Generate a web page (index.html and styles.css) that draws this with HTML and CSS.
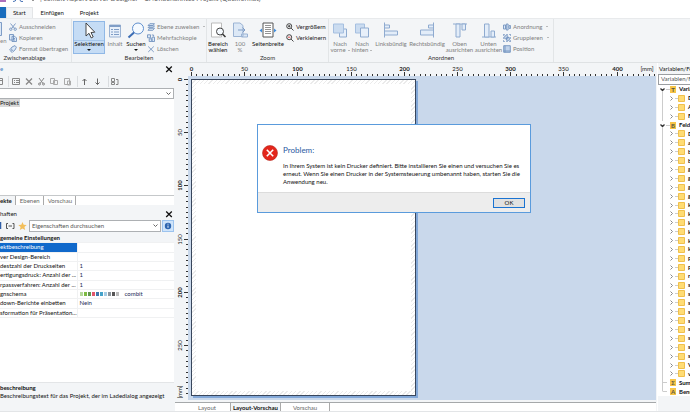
FILE: index.html
```html
<!DOCTYPE html>
<html lang="de">
<head>
<meta charset="utf-8">
<meta name="viewport" content="width=device-width, initial-scale=1">
<title>Designer</title>
<link rel="stylesheet" href="styles.css">
</head>
<body>
<svg class="defs" aria-hidden="true">
  <symbol id="cut" viewBox="0 0 8 8"><path d="M1.5 .5 5.6 5.5M6.5 .5 2.6 5.5"/><circle cx="1.8" cy="6.2" r="1.2"/><circle cx="6.2" cy="6.2" r="1.2"/></symbol>
  <symbol id="copy" viewBox="0 0 8 8"><path class="f" d="M.5.5h4v5.500h-4zM3 2.300h2.800L7.500 4v3.500H3z"/><path d="M4 4.500h2M4 6h2"/></symbol>
  <symbol id="brush" viewBox="0 0 8 8"><path class="f" d="M3 2 6 .6l1.400 1.600L6 5 4.500 6.200 1.800 3.600z"/><path d="M1.800 3.600.6 5l2.600 2.500 1.300-1.300M2 6.200l1-1"/></symbol>
  <symbol id="layers" viewBox="0 0 8 8"><path class="f" d="M2.800.7h4.700L5.800 2.500H1zM2.800 2.900h4.700L5.800 4.700H1zM2.800 5.200h4.700L5.800 7.300H1z"/></symbol>
  <symbol id="multi" viewBox="0 0 8 8"><path class="f" d="M.5.8h3v3h-3zM2.200 4.800h2.600v2.700H2.200zM5 3.200h2.500v4.300H5z"/><path d="M4.800 1h1.800v1.600"/></symbol>
  <symbol id="x" viewBox="0 0 8 8"><path d="m1.200 1.500 5.600 5.500M6.800 1.500 1.200 7"/></symbol>
  <symbol id="zin" viewBox="0 0 8 8"><circle cx="3.200" cy="3.200" r="2.500"/><path d="m5.100 5.100 2.400 2.400M2 3.200h2.400M3.200 2v2.400"/></symbol>
  <symbol id="zout" viewBox="0 0 8 8"><circle cx="3.200" cy="3.200" r="2.500"/><path d="m5.100 5.100 2.400 2.400"/><path class="red" d="M2 3.200h2.400"/></symbol>
  <symbol id="arrange" viewBox="0 0 8 8"><path class="f" d="M.5 2h2v4h-2zM3.300 1h1.800v6H3.300zM6 2.600h1.600v2.800H6z"/></symbol>
  <symbol id="group" viewBox="0 0 8 8"><path class="f" d="M1.800 1.800h3v3h-3zM3.500 3.500h2.800v2.800H3.500z"/><path d="M.4 1.800V.4h1.400M6.200.4h1.400v1.400M7.600 6.200v1.400H6.200M1.800 7.600H.4V6.200M3.200.4h1.600M3.200 7.600h1.600M.4 3.200v1.600M7.600 3.200v1.600"/></symbol>
  <symbol id="pos" viewBox="0 0 8 8"><path d="M.7.7h6.600v6.600H.7z" fill="#c0d2ea"/><path d="M2 .7v6.600M.7 6h6.600"/></symbol>
</svg>
<div class="app">
  <header>
    <div class="titlebar">
      <svg width="36" height="3" viewBox="0 0 36 3"><path d="M0 0h6v2H0z" fill="#ad70bb"/><path d="M13 1.500q3 0 3-2M20 0q0 2 3 1.500" fill="none" stroke="#4b76b8"/><path d="M32 0h2l-1 1z" fill="#333"/></svg>
      <span>| combit Report Server Designer - C:\Unbenanntes Projekt (Quellformat)</span>
    </div>
    <nav class="tabs"><span class="file"></span><a class="on" href="#">Start</a><a href="#">Einfügen</a><a href="#">Projekt</a></nav>
    <div class="ribbon">
      <section class="group g1">
        <div class="tools">
          <div class="rest"><svg width="3" height="16" viewBox="0 0 3 16"><path d="M0 1.500h1.500v13H0" fill="#dce8f6" stroke="#7f9dc6"/></svg><span>en</span></div>
          <div class="small">
            <button><svg><use href="#cut"/></svg>Ausschneiden</button>
            <button><svg><use href="#copy"/></svg>Kopieren</button>
            <button><svg><use href="#brush"/></svg>Format übertragen</button>
          </div>
        </div>
        <h2>Zwischenablage</h2>
      </section>
      <section class="group g2">
        <div class="tools">
          <button class="big sel"><svg viewBox="0 0 18 17"><path d="M6 1v13l3-2.700 2.200 4.600 2-1-2.200-4.400 3.800-.3z" fill="#fff" stroke="#333" stroke-width=".9"/></svg><span>Selektieren</span><i></i></button>
          <button class="big off"><svg viewBox="0 0 18 17"><path d="M3.500 3.500h11v12h-11z" fill="#e8f0fa" stroke="#9bb3d3"/><path d="M3.500 4.500h11" stroke="#7f9dc6" stroke-width="2"/><path d="M5 8h2m1 0h5M5 10.500h2m1 0h5M5 13h2m1 0h5" stroke="#7f9dc6"/></svg><span>Inhalt</span></button>
          <button class="big"><svg viewBox="0 0 18 17"><circle cx="11" cy="7" r="5.500" fill="#f5faff" stroke="#5f8fce"/><path d="m7 11-5.500 5" stroke="#3c6db4" stroke-width="2"/></svg><span>Suchen</span><i></i></button>
          <div class="small">
            <button><svg><use href="#layers"/></svg>Ebene zuweisen<i></i></button>
            <button><svg><use href="#multi"/></svg>Mehrfachkopie</button>
            <button><svg><use href="#x"/></svg>Löschen</button>
          </div>
        </div>
        <h2>Bearbeiten</h2>
      </section>
      <section class="group g3">
        <div class="tools">
          <button class="big"><svg viewBox="0 0 18 17"><path d="M2.500 1.500h10v14h-10z" fill="#fff" stroke="#bbb"/><circle cx="11" cy="10" r="3.500" fill="#f5faff" stroke="#444"/><path d="m13.500 12.500 3 3" stroke="#333" stroke-width="1.500"/></svg><span>Bereich<br>wählen</span></button>
          <button class="big off"><svg viewBox="0 0 18 17"><path d="M2.500 1.500H9L12 4v11H2.500zM10.500 12.500h6v3h-6z" fill="#dce8f6" stroke="#9bb3d3"/><path d="M7 8.500h7M11.500 6l2.500 2.500-2.500 2.500" fill="none" stroke="#7f9dc6"/></svg><span>100<br>%</span></button>
          <button class="big"><svg viewBox="0 0 18 17"><path d="M4 1.500h10v14H4z" fill="#fff" stroke="#555"/><path d="M6 4h6M6 6h6M6 8h6M6 10h6M6 12h6" stroke="#777" stroke-width=".8"/><path d="m3 7-2.500 2L3 11zM15 7l2.500 2-2.500 2z" fill="#3f8ee0"/></svg><span>Seitenbreite</span></button>
          <div class="small dark">
            <button><svg><use href="#zin"/></svg>Vergrößern</button>
            <button><svg><use href="#zout"/></svg>Verkleinern</button>
          </div>
        </div>
        <h2>Zoom</h2>
      </section>
      <section class="group g4">
        <div class="tools">
          <button class="big off"><svg viewBox="0 0 18 17"><path d="M8.500 7.500h7v8h-7z" fill="#e8f0fa" stroke="#8fabd0"/><path d="M2.500 2.500h10v9h-10z" fill="#cbdcf0" stroke="#a5bfe0"/></svg><span>Nach<br>vorne<i></i></span></button>
          <button class="big off"><svg viewBox="0 0 18 17"><path d="M2.500 2.500h9v9h-9z" fill="#cbdcf0" stroke="#a5bfe0"/><path d="M7.500 6.500h8v9h-8z" fill="#e8f0fa" stroke="#8fabd0"/></svg><span>Nach<br>hinten<i></i></span></button>
          <button class="big off"><svg viewBox="0 0 18 17"><path d="M2.500 1v15" stroke="#8fabd0"/><path d="M2.500 3.500h5v3h-5zM2.500 9.500h13v4h-13z" fill="#e3edf9" stroke="#8fabd0"/></svg><span>Linksbündig</span></button>
          <button class="big off"><svg viewBox="0 0 18 17"><path d="M15.500 1v15" stroke="#8fabd0"/><path d="M10.500 3.500h5v3h-5zM2.500 8.500h13v5h-13z" fill="#e3edf9" stroke="#8fabd0"/></svg><span>Rechtsbündig</span></button>
          <button class="big off"><svg viewBox="0 0 18 17"><path d="M2 2.500h14" stroke="#8fabd0"/><path d="M5 2.500h4v13H5zM11 2.500h3.500v6H11z" fill="#e3edf9" stroke="#8fabd0"/></svg><span>Oben<br>ausrichten</span></button>
          <button class="big off"><svg viewBox="0 0 18 17"><path d="M2 15.500h14" stroke="#8fabd0"/><path d="M4.500 2.500h4.500v13H4.500zM11 9.500h3.500v6H11z" fill="#e3edf9" stroke="#8fabd0"/></svg><span>Unten<br>ausrichten</span></button>
          <div class="small">
            <button><svg><use href="#arrange"/></svg>Anordnung<i></i></button>
            <button><svg><use href="#group"/></svg>Gruppieren<i></i></button>
            <button><svg><use href="#pos"/></svg>Position</button>
          </div>
        </div>
        <h2>Anordnen</h2>
      </section>
    </div>
  </header>
  <main>
    <aside class="left">
      <div class="head"><span class="blue">e</span><button aria-label="Schließen"><svg viewBox="0 0 8 8"><use href="#x"/></svg></button></div>
      <div class="toolbar">
        <svg viewBox="0 0 122 13"><g fill="none" stroke="#888"><path d="M0 3.500h2.500v6H0M0 5.500h2"/><path d="M12.500 3.500h7v6h-7zM14 5.500h1m1 0h3M14 7.500h1m1 0h3"/><path d="m26 3.500 6 6M32 3.500l-6 6" stroke-width="1.300"/><path d="m39 3 4 5.500M44 3l-4 5.500"/><circle cx="39.500" cy="9" r="1"/><circle cx="43.500" cy="9" r="1"/><path d="M50.500 3.500h4v5h-4zM53.500 5.500h4v4h-4z" stroke="#aaa"/><path d="M64.500 3.500h5v6h-5zM67.500 6h3v4h-3z" stroke="#aaa"/><path d="M84.500 10V4m-2 2 2-2 2 2M97.500 3.500v6m-2-2 2 2 2-2" stroke="#666"/><path d="M111.500 3.500h3v3h-3zM111.500 7.500h3v2h-3zM116 4.500h2v5h-2"/></g><path d="M8.500 1v11M77.500 1v11M108.500 1v11" stroke="#d9dcdf"/></svg>
      </div>
      <select class="combo" aria-label="Objekt"><option></option></select>
      <div class="objects"><span>Projekt</span></div>
      <div class="subtabs"><a class="on" href="#">ekte</a><a href="#">Ebenen</a><a href="#">Vorschau</a></div>
      <div class="head"><span>haften</span><button aria-label="Schließen"><svg viewBox="0 0 8 8"><use href="#x"/></svg></button></div>
      <div class="search">
        <svg viewBox="0 0 28 12"><path d="M.5 2v7" stroke="#2f5fa8" stroke-width="1.500"/><path d="M8 3.500H6.500v5H8M12.500 3.500H14v5h-1.500M8.500 6h3.500" fill="none" stroke="#555"/><path d="m22.500 2 1.200 2.800 3 .2-2.300 2 .8 3-2.700-1.600L19.800 10l.8-3-2.300-2 3-.2z" fill="#f3bf5b"/></svg>
        <select aria-label="Eigenschaften durchsuchen"><option>Eigenschaften durchsuchen</option></select>
        <button aria-label="Info"><svg viewBox="0 0 11 11"><circle cx="5.500" cy="5.500" r="3.500" fill="#2d65b0"/><path d="M5.500 5v2.500M5.500 3v1" stroke="#fff"/></svg></button>
      </div>
      <div class="props">
        <table>
          <colgroup><col class="name"><col></colgroup>
          <tr><th colspan="2">gemeine Einstellungen</th></tr>
          <tr class="cur"><td>ektbeschreibung</td><td></td></tr>
          <tr><td>ver Design-Bereich</td><td></td></tr>
          <tr><td>destzahl der Druckseiten</td><td>1</td></tr>
          <tr><td>ertigungsdruck: Anzahl der ...</td><td>1</td></tr>
          <tr><td>rpassverfahren: Anzahl der ...</td><td>1</td></tr>
          <tr><td>gnschema</td><td><svg width="40" height="4" viewBox="0 0 40 4"><path fill="#b5d99c" d="M0 0h3v4H0z"/><path fill="#7dbb42" d="M4 0h3v4H4z"/><path fill="#5f9650" d="M8 0h3v4H8z"/><path fill="#e0566c" d="M12 0h3v4h-3z"/><path fill="#3f74ab" d="M16 0h3v4h-3z"/><path fill="#44a2ca" d="M20 0h3v4h-3z"/><path fill="#a6cce4" d="M24 0h3v4h-3z"/><path fill="#8b949c" d="M28 0h3v4h-3z"/><path fill="#555" d="M32 0h3v4h-3z"/><path fill="#bbb" d="M36 0h3v4h-3z"/></svg><span class="scheme">combit</span></td></tr>
          <tr><td>down-Berichte einbetten</td><td>Nein</td></tr>
          <tr><td>sformation für Präsentation...</td><td></td></tr>
        </table>
      </div>
      <div class="desc"><b>beschreibung</b><p>Beschreibungstext für das Projekt, der im Ladedialog angezeigt</p></div>
    </aside>
    <section class="center">
      <svg class="hruler" id="hruler"></svg>
      <svg class="vruler" id="vruler"></svg>
      <div class="canvas"><div class="page"><div></div></div></div>
      <div class="viewtabs"><a href="#">Layout</a><a class="on" href="#">Layout-Vorschau</a><a href="#">Vorschau</a></div>
    </section>
    <aside class="right">
      <div class="head">Variablen/Felder</div>
      <div class="filter">Variablen/Felder</div>
      <ul id="tree"></ul>
    </aside>
  </main>
  <div class="dialog" role="alertdialog" aria-labelledby="dt">
    <div class="body">
      <svg viewBox="0 0 16 16"><circle cx="8" cy="8" r="7.500" fill="#e3261b" stroke="#b5281f" stroke-width=".6"/><path d="m4.800 4.800 6.400 6.400M11.200 4.800l-6.400 6.400" stroke="#fff" stroke-width="1.600"/></svg>
      <div><h1 id="dt">Problem:</h1><p>In Ihrem System ist kein Drucker definiert. Bitte installieren Sie einen und versuchen Sie es<br>erneut. Wenn Sie einen Drucker in der Systemsteuerung umbenannt haben, starten Sie die<br>Anwendung neu.</p></div>
    </div>
    <footer><button>OK</button></footer>
  </div>
</div>
<script src="app.js"></script>
</body>
</html>
```
FILE: styles.css
```css
* { box-sizing: border-box; }
body { margin: 0; font: 6px/8px Lato, "Open Sans", sans-serif; color: #111; background: #fff; }
h1, h2, p, ul { margin: 0; padding: 0; font-weight: normal; }
a { color: inherit; text-decoration: none; }
button, select { font: inherit; color: inherit; border: 0; padding: 0; margin: 0; background: none; }
.defs { position: absolute; width: 0; height: 0; }
.app { height: 100vh; display: flex; flex-direction: column; overflow: hidden; white-space: nowrap; border-bottom: 1px solid #e3e5e7; }
header { flex: none; }

.titlebar { height: 7px; display: flex; gap: 4px; overflow: hidden; color: #666; font-size: 7px; line-height: 1px; }
.titlebar span { margin-top: -2px; }
.titlebar svg { flex: none; }
.tabs { display: flex; height: 11px; line-height: 11px; }
.tabs .file { width: 6px; background: #1a6dbd; }
.tabs a { padding: 0 8px; }
.tabs .on { background: #f3f5f7; border: 1px solid #e3e5e7; border-bottom: 0; padding: 0 6px; line-height: 10px; }

.ribbon { display: flex; height: 45px; background: #f3f5f7; border-top: 1px solid #e8eaec; border-bottom: 1px solid #dfe2e4; }
.group { border-right: 1px solid #e2e5e7; display: flex; flex-direction: column; padding-top: 2px; }
.g1 { width: 72px; }
.g2 { width: 135px; }
.g3 { width: 122px; }
.g4 { width: 225px; }
.tools { display: flex; height: 34px; }
.group h2 { font-size: 6px; line-height: 8px; text-align: center; color: #333; }
.g1 h2 { padding-right: 22px; }
.rest { width: 9px; color: #888; }
.rest svg { display: block; }
.small { display: flex; flex-direction: column; color: #808080; }
.small button { display: flex; align-items: center; gap: 2px; height: 11px; }
.small svg { width: 8px; height: 8px; fill: none; stroke: #7393c0; stroke-width: .9; }
.f { fill: #dce8f6; }
.red { stroke: #d33; }
.dark { color: #222; }
.dark svg { stroke: #333; }
.ribbon i { display: inline-block; border: 1px solid transparent; border-top-color: currentColor; border-bottom: 0; margin-left: 2px; vertical-align: middle; }
.big { display: flex; flex-direction: column; align-items: center; line-height: 6px; }
.big svg { width: 18px; height: 18px; flex: none; }
.big span { margin-top: 2px; }
.big > i { margin: 2px 0 0; border-width: 2px 2px 0; }
.off { color: #808080; }
.sel { background: #c5dcf5; border: 1px solid #90b8e6; }
.sel svg { height: 17px; }
.sel span { border-top: 1px solid #a5c6ea; margin-top: 1px; }
.g2 .tools { display: grid; grid-template-columns: 32px 20px 22px auto; padding-left: 1px; justify-content: start; }
.g3 .tools { display: grid; grid-template-columns: 22px 20px 34px auto; column-gap: 1px; justify-content: start; }
.g4 .tools { display: grid; grid-template-columns: 22px 22px 36px 36px 29px 29px auto; justify-content: start; }

main { flex: 1; min-height: 0; display: grid; grid-template-columns: 176px minmax(0, 1fr) 33px; background: #f3f5f7; }
.left { display: flex; flex-direction: column; min-width: 0; margin-right: 2px; overflow: hidden; }
.head { display: flex; justify-content: space-between; align-items: center; height: 12px; flex: none; }
.left .head svg { width: 8px; height: 8px; display: block; stroke: #111; stroke-width: 1.3; }
.left .head button { padding-right: 1px; }
.blue { color: #3b7fc4; }
.toolbar { height: 13px; flex: none; }
.toolbar svg { width: 122px; height: 13px; display: block; }
.combo, .search select { appearance: none; border: 1px solid #adb0b3; background: #fff url("data:image/svg+xml,%3Csvg xmlns='http://www.w3.org/2000/svg' width='5' height='4'%3E%3Cpath d='m.5.5 2 2 2-2' fill='none' stroke='%23666'/%3E%3C/svg%3E") no-repeat right 2px center; }
.combo { height: 11px; flex: none; width: 100%; border-left: 0; }
.objects { flex: 0 0 96px; background: #fff; }
.objects span { display: inline-block; background: #d9d9d9; padding-right: 1px; }
.subtabs { display: flex; flex: none; height: 12px; line-height: 10px; border-top: 1px solid #c5c8ca; background: #fff; border-bottom: 2px solid #f3f5f7; color: #666; margin-bottom: 1px; }
.subtabs a { padding: 0 3px; border-right: 1px solid #aaa; }
.subtabs a + a { padding-left: 4px; }
.subtabs .on { color: #111; font-weight: 700; background: #f3f5f7; padding-left: 0; }
.search { display: flex; flex: none; height: 14px; gap: 1px; padding-bottom: 2px; }
.search > svg { width: 28px; height: 12px; flex: none; }
.search select { flex: 1; min-width: 0; padding: 0 2px; color: #555; }
.search button { width: 12px; border: 1px solid #9cc3ee; background: #cfe4fa; }
.search button svg { width: 10px; height: 10px; display: block; }
.props { flex: 1; min-height: 0; background: #fff; }
table { border-collapse: collapse; table-layout: fixed; width: 100%; height: 84px; }
.name { width: 77px; }
td, th { padding: 0; border-bottom: 1px solid #f0f1f2; text-align: left; line-height: 8px; overflow: hidden; }
td:first-child { border-right: 1px solid #f0f1f2; }
th { background: #f3f5f7; }
td + td { padding-left: 2px; color: #1c2a55; }
.cur td:first-child { background: #1169cb; color: #fff; }
.scheme { margin-left: 5px; }
.desc { flex: none; height: 29px; line-height: 8px; padding-top: 1px; border-top: 1px solid #e3e5e7; }

.center { display: grid; grid-template: 13px minmax(0, 1fr) 9px / 12px minmax(0, 1fr); margin-right: 1px; }
.hruler { grid-area: 1 / 1 / 2 / 3; width: 100%; height: 13px; }
.vruler { grid-area: 2 / 1; width: 12px; height: 100%; }
.hruler text, .vruler text { font-size: 6px; text-anchor: middle; fill: #222; }
.hruler path, .vruler path { stroke: #333; fill: none; }
.canvas { background: #c9d8eb; padding: 3px; overflow: hidden; margin-bottom: 2px; }
.page { width: 225px; height: 100%; max-height: 317px; background: repeating-linear-gradient(135deg, #fff 0 2px, #ebebeb 2px 3px); border: 1px solid #38465c; box-shadow: 2px 2px 0 #83a8d8; padding: 4px; }
.page div { height: 100%; background: #fff; }
.viewtabs { grid-column: 1 / 3; display: flex; line-height: 9px; background: #fff; border-top: 1px solid #a5a8aa; color: #666; margin-left: -1px; }
.viewtabs a { padding: 0 12px; border-right: 1px solid #aaa; }
.viewtabs a:first-child { padding: 0 14px 0 23px; }
.viewtabs .on { padding: 0 2px; background: #f3f5f7; color: #111; font-weight: 700; }

.right { overflow: hidden; border-left: 1px solid #fff; display: flex; flex-direction: column; }
.right .head { height: 11px; padding-left: 1px; flex: none; }
.filter { height: 11px; flex: none; border: 1px solid #9b9ea1; border-right: 0; background: #fff; padding-left: 2px; color: #555; }
.right ul { list-style: none; background: #fff; height: 311px; display: flex; flex-direction: column; }
.right li { flex: 1 1 0; min-height: 0; display: flex; align-items: center; font-weight: 700; }
.right li svg { width: 28px; height: 9px; flex: none; margin-right: 2px; }
.right li.root svg { width: 19px; }

.dialog { position: absolute; left: 257px; top: 124px; width: 274px; height: 89px; background: #fff; border: 1px solid #5a9bdc; display: flex; flex-direction: column; }
.body { flex: 1; display: flex; gap: 5px; padding: 20px 4px 0; }
.body svg { width: 16px; height: 16px; flex: none; }
.dialog h1 { font-size: 8px; line-height: 10px; color: #2a5a9f; margin-bottom: 7px; }
.dialog p { line-height: 8px; }
.dialog footer { height: 20px; background: #ededed; border-top: 1px solid #dcdcdc; display: flex; justify-content: flex-end; align-items: center; padding-right: 5px; }
.dialog footer button { width: 32px; height: 10px; border: 1px solid #1a73d1; background: #e1e1e1; line-height: 8px; }
```
FILE: app.js
```js
// Ruler ticks: 5 mm apart, long and labelled every 50 mm.
const SCALE = 1.064;
function ruler(id, origin, count, vertical) {
  let ticks = '', labels = '';
  for (let i = 0; i <= count; i++) {
    const p = Math.round(origin + i * 5 * SCALE) + 0.5;
    const len = i % 10 ? 2 : 4;
    ticks += vertical ? `M${12 - len} ${p}H12` : `M${p} ${13 - len}V13`;
    if (i % 10 === 0) {
      const weight = i % 20 ? 400 : 700;
      labels += vertical
        ? `<text transform="translate(6 ${p}) rotate(-90)" font-weight="${weight}">${i * 5}</text>`
        : `<text x="${p}" y="8" font-weight="${weight}">${i * 5}</text>`;
    }
  }
  labels += vertical
    ? '<text transform="translate(6 316) rotate(-90)">[mm]</text>'
    : '<text x="471" y="8">[mm]</text>';
  document.getElementById(id).innerHTML = `<path d="${ticks}"/>${labels}`;
}
ruler('hruler', 15, 87, false);
ruler('vruler', 3, 59, true);

// Field tree
const rows = [['Variablen'], 'D', 'A', 'F', ['Felder'], ...'DabbggggkkkkkkpprsssssssssVv', ['Summen'], ['Benutzer']];
document.getElementById('tree').innerHTML = rows.map((r, i) => {
  const root = Array.isArray(r);
  const last = i > rows.length - 3;
  const y2 = i === rows.length - 1 ? 4.5 : 9;
  const line = `<path d="M4.5 ${root && !last ? 7 : 0}V${y2}" stroke="#ccc"/>`;
  if (root) {
    const glyph = ['T', 'B', 'Σ', 'A'][last ? i - rows.length + 4 : i ? 1 : 0];
    return `<li class="root"><svg viewBox="0 0 19 9">${line}${last ? '' : '<path d="m2.500 3.500 2 2 2-2" fill="none" stroke="#333" stroke-width="1.300"/>'}<path d="M${last ? 5 : 8} 4.500h4" stroke="#ccc"/><path d="M12 1h6v7h-6z" fill="#f7c548"/><text x="15" y="7" font-size="6" text-anchor="middle" fill="#554">${glyph}</text></svg>${r[0]}</li>`;
  }
  return `<li><svg viewBox="0 0 28 9">${line}<path d="m12.500 2.500 2 2-2 2" fill="none" stroke="#888"/><path d="M17 4.500h3" stroke="#ccc"/><path d="M20.500 1.500h6v6h-6z" fill="#ffdc74" stroke="#f0c04c"/></svg>${r}</li>`;
}).join('');
```
